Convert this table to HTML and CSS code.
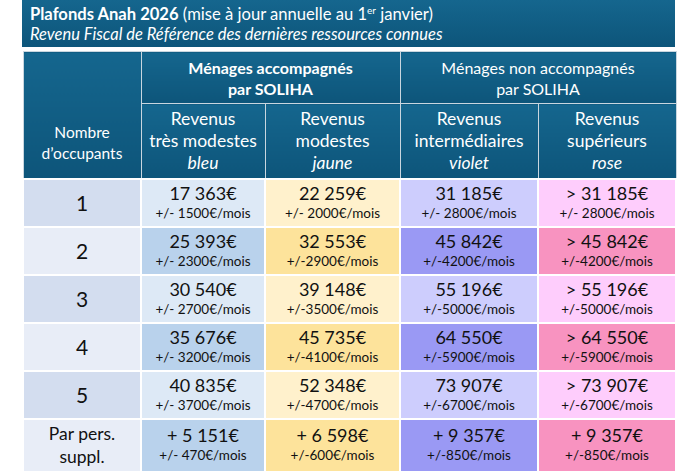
FILE: index.html
```html
<!DOCTYPE html>
<html lang="fr">
<head>
<meta charset="utf-8">
<link rel="stylesheet" href="styles.css">
</head>
<body>
<div class="wrap">
  <div class="banner">
    <div class="title"><b>Plafonds Anah 2026</b> (mise à jour annuelle au 1<sup>er</sup> janvier)</div>
    <div class="subtitle">Revenu Fiscal de Référence des dernières ressources connues</div>
  </div>
  <table class="grid">
    <colgroup>
      <col class="c0"><col class="c1"><col class="c2"><col class="c3"><col class="c4">
    </colgroup>
    <thead>
      <tr class="h1">
        <th rowspan="2" class="occ">Nombre<br>d’occupants</th>
        <th colspan="2" class="strong">Ménages accompagnés<br>par SOLIHA</th>
        <th colspan="2">Ménages non accompagnés<br>par SOLIHA</th>
      </tr>
      <tr class="h2">
        <th>Revenus<br>très modestes<br><i>bleu</i></th>
        <th>Revenus<br>modestes<br><i>jaune</i></th>
        <th>Revenus<br>intermédiaires<br><i>violet</i></th>
        <th>Revenus<br>supérieurs<br><i>rose</i></th>
      </tr>
    </thead>
    <tbody>
      <tr class="odd">
        <td class="n">1</td>
        <td class="b"><span class="v">17 363€</span><span class="m">+/- 1500€/mois</span></td>
        <td class="j"><span class="v">22 259€</span><span class="m">+/- 2000€/mois</span></td>
        <td class="vi"><span class="v">31 185€</span><span class="m">+/- 2800€/mois</span></td>
        <td class="r"><span class="v">&gt; 31 185€</span><span class="m">+/- 2800€/mois</span></td>
      </tr>
      <tr class="even">
        <td class="n">2</td>
        <td class="b"><span class="v">25 393€</span><span class="m">+/- 2300€/mois</span></td>
        <td class="j"><span class="v">32 553€</span><span class="m">+/-2900€/mois</span></td>
        <td class="vi"><span class="v">45 842€</span><span class="m">+/-4200€/mois</span></td>
        <td class="r"><span class="v">&gt; 45 842€</span><span class="m">+/-4200€/mois</span></td>
      </tr>
      <tr class="odd">
        <td class="n">3</td>
        <td class="b"><span class="v">30 540€</span><span class="m">+/- 2700€/mois</span></td>
        <td class="j"><span class="v">39 148€</span><span class="m">+/-3500€/mois</span></td>
        <td class="vi"><span class="v">55 196€</span><span class="m">+/-5000€/mois</span></td>
        <td class="r"><span class="v">&gt; 55 196€</span><span class="m">+/-5000€/mois</span></td>
      </tr>
      <tr class="even">
        <td class="n">4</td>
        <td class="b"><span class="v">35 676€</span><span class="m">+/- 3200€/mois</span></td>
        <td class="j"><span class="v">45 735€</span><span class="m">+/-4100€/mois</span></td>
        <td class="vi"><span class="v">64 550€</span><span class="m">+/-5900€/mois</span></td>
        <td class="r"><span class="v">&gt; 64 550€</span><span class="m">+/-5900€/mois</span></td>
      </tr>
      <tr class="odd">
        <td class="n">5</td>
        <td class="b"><span class="v">40 835€</span><span class="m">+/- 3700€/mois</span></td>
        <td class="j"><span class="v">52 348€</span><span class="m">+/-4700€/mois</span></td>
        <td class="vi"><span class="v">73 907€</span><span class="m">+/-6700€/mois</span></td>
        <td class="r"><span class="v">&gt; 73 907€</span><span class="m">+/-6700€/mois</span></td>
      </tr>
      <tr class="even last">
        <td class="n small">Par pers.<br>suppl.</td>
        <td class="b"><span class="v">+ 5 151€</span><span class="m">+/- 470€/mois</span></td>
        <td class="j"><span class="v">+ 6 598€</span><span class="m">+/-600€/mois</span></td>
        <td class="vi"><span class="v">+ 9 357€</span><span class="m">+/-850€/mois</span></td>
        <td class="r"><span class="v">+ 9 357€</span><span class="m">+/-850€/mois</span></td>
      </tr>
    </tbody>
  </table>
</div>
</body>
</html>
```

FILE: styles.css
```css
* { box-sizing: border-box; }
html, body { margin: 0; padding: 0; background: #ffffff; }
body { font-family: Lato, "Open Sans", "Liberation Sans", sans-serif; color: #111; }

.wrap {
  width: 653px;
  margin-left: 22px;
}

.banner {
  height: 47px;
  background: linear-gradient(#15668e, #0d557a);
  color: #fff;
  padding: 4px 0 0 8px;
}
.title { font-size: 16.6px; line-height: 20px; white-space: nowrap; }
.title b { font-weight: 700; }
.title sup { font-size: 10px; line-height: 0; vertical-align: 6px; }
.subtitle { font-size: 16.5px; line-height: 21px; font-style: italic; white-space: nowrap; }

.grid {
  margin-top: 4px;
  width: 653px;
  border-collapse: collapse;
  table-layout: fixed;
}
.c0 { width: 118px; }
.c1 { width: 124px; }
.c2 { width: 135px; }
.c3 { width: 138px; }
.c4 { width: 138px; }

.grid th {
  background: linear-gradient(#15668e, #0d557a);
  color: #fff;
  font-weight: 400;
  font-size: 16px;
  line-height: 21px;
  border: 1.5px solid #c9d6df;
  padding: 0;
  text-align: center;
  vertical-align: middle;
}
.grid th i { font-style: italic; }
.grid .h1 th { height: 52px; }
.grid .h1 th.strong { font-weight: 700; }
.grid .h2 th { height: 75px; font-size: 17.5px; line-height: 22px; }
.grid th.occ { font-size: 15.5px; line-height: 21px; padding-top: 56px; }

.grid td {
  border: 2px solid #ffffff;
  height: 48px;
  padding: 0;
  text-align: center;
  vertical-align: middle;
}
.grid tr.last td { height: 53px; }
.grid td .v { display: block; font-size: 18px; line-height: 21px; }
.grid td .m { display: block; font-size: 13.5px; line-height: 19px; }
.grid td.n { font-size: 21px; }
.grid td.n.small { font-size: 17.5px; line-height: 23px; }

.odd .n { background: #d3ddef; }
.even .n { background: #e8edf7; }
.odd .b { background: #dde9f6; }
.even .b { background: #b9d2ec; }
.odd .j { background: #fff1cc; }
.even .j { background: #fde39b; }
.odd .vi { background: #cdcdfd; }
.even .vi { background: #9a99f4; }
.odd .r { background: #fecdfc; }
.even .r { background: #f893c0; }
```
